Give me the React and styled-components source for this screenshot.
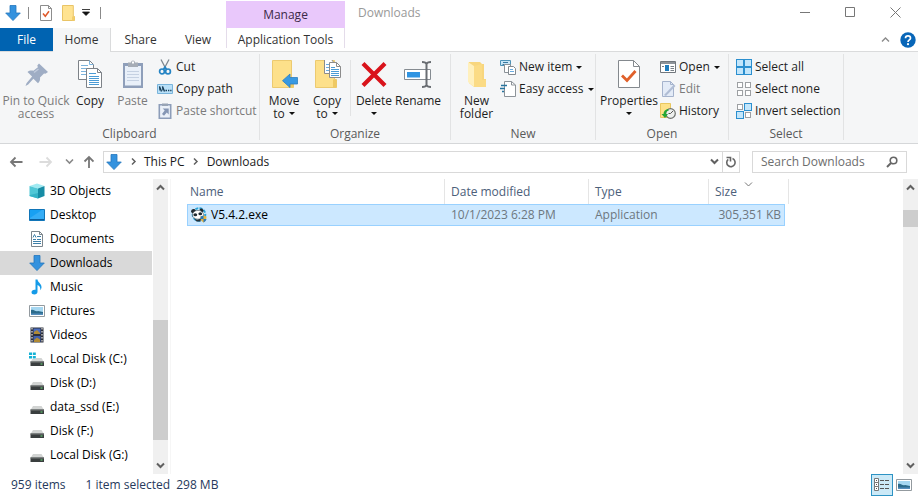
import React from 'react'
import styled, { createGlobalStyle, css } from 'styled-components'

const GlobalStyle = createGlobalStyle`
  * {
    box-sizing: border-box;
  }

  body {
    margin: 0;
    background: #fff;
    color: #1e1e1e;
    font: 12px/16px "Open Sans", "Noto Sans", sans-serif;
  }

  button, input {
    margin: 0;
    padding: 0;
    border: 0;
    background: none;
    color: inherit;
    font: inherit;
  }

  svg {
    display: block;
    flex: none;
  }
`

const Window = styled.div`
  display: flex;
  flex-direction: column;
  min-height: 100vh;
`

/* title bar */
const TitleBar = styled.header`
  display: flex;
  height: 28px;
`
const QuickAccess = styled.div`
  display: flex;
  align-items: center;
  width: 226px;
  padding: 0 0 3px 5px;
`
const QuickButton = styled.button`
  display: flex;
  justify-content: center;
  width: ${({ $width }) => $width || 22}px;
`
const QuickDivider = styled.span`
  width: 1px;
  height: 12px;
  margin: 0 6px 0 7px;
  background: #8a8a8a;
`
const ContextTitle = styled.div`
  width: 119px;
  margin-top: 1px;
  background: #e9c8fb;
  color: #3c2a48;
  line-height: 28px;
  text-align: center;
`
const Title = styled.h1`
  flex: 1;
  margin: 0;
  padding-left: 13px;
  color: #999;
  font-size: 12px;
  font-weight: 400;
  line-height: 26px;
`
const WindowButton = styled.button`
  display: flex;
  align-items: center;
  justify-content: center;
  width: 45px;
  height: 24px;
`

/* tabs */
const Tabs = styled.nav`
  display: flex;
  height: 24px;
  border-bottom: 1px solid #dadbdc;
`
const Tab = styled.button`
  width: ${({ $width }) => $width}px;
  height: 24px;
  color: #333;

  ${({ $kind }) => $kind === 'file' && css`
    height: 23px;
    background: #0063b1;
    color: #fff;
  `}
  ${({ $kind }) => $kind === 'active' && css`
    border-right: 1px solid #dadbdc;
    background: #f5f6f7;
  `}
  ${({ $kind }) => $kind === 'context' && css`
    height: 20px;
    padding-top: 4px;
    border: solid #e4dcea;
    border-width: 0 1px;
  `}
`
const TabTools = styled.div`
  display: flex;
  align-items: center;
  gap: 10px;
  margin-left: auto;
  padding-right: 2px;
`
const IconButton = styled.button`
  display: flex;
  align-items: center;
  justify-content: center;
`

/* ribbon */
const Ribbon = styled.section`
  display: flex;
  height: 92px;
  border-bottom: 1px solid #d5d7d9;
  background: #f5f6f7;
`
const Group = styled.div`
  display: flex;
  flex-direction: column;
  width: ${({ $width }) => $width}px;
`
const GroupShell = styled.div`
  display: flex;

  &::after {
    content: '';
    width: 1px;
    margin: 2px 0 3px;
    background: #e2e3e4;
  }
`
const GroupBody = styled.div`
  display: flex;
  flex: 1;
  padding: 4px 0 0 ${({ $left }) => $left}px;
`
const GroupLabel = styled.div`
  height: 18px;
  color: #5a5a5a;
  line-height: 18px;
  text-align: center;
`
const BigButton = styled.button`
  display: flex;
  flex-direction: column;
  align-items: center;
  width: ${({ $width }) => $width || 44}px;
  padding-top: 4px;
  color: ${({ disabled }) => (disabled ? '#7b7b7b' : '#1e1e1e')};
  line-height: 13px;
  white-space: nowrap;

  > svg {
    margin-bottom: 6px;
  }
`
const BigLine = styled.span`
  display: flex;
  align-items: center;
  justify-content: center;
  gap: 4px;
  min-height: 13px;
`
const SmallList = styled.div`
  display: flex;
  flex-direction: column;
`
const SmallButton = styled.button`
  display: flex;
  align-items: center;
  gap: 3px;
  height: 22px;
  color: ${({ disabled }) => (disabled ? '#7b7b7b' : '#1e1e1e')};
  white-space: nowrap;
`
const Split = styled.span`
  width: 1px;
  height: 56px;
  margin: 4px 1px 0 2px;
  background: #e2e3e4;
`
const CaretSlot = styled.span`
  margin-left: 1px;
`

/* address row */
const AddressRow = styled.div`
  display: flex;
  align-items: center;
  height: 35px;
  padding: 0 11px 0 8px;
`
const NavButton = styled(IconButton)`
  width: ${({ $width }) => $width}px;
  height: 20px;
`
const AddressBox = styled.div`
  display: flex;
  flex: 1;
  height: 22px;
  border: 1px solid #d9d9d9;
`
const Crumbs = styled.div`
  display: flex;
  align-items: center;
  flex: 1;
  padding-left: 2px;
`
const Crumb = styled.a`
  color: #1a1a1a;
  text-decoration: none;
`
const CrumbArrow = styled.span`
  display: flex;
  justify-content: center;
  width: 22px;
`
const Refresh = styled(IconButton)`
  width: 17px;
  border-left: 1px solid #d9d9d9;
`
const SearchBox = styled.label`
  display: flex;
  align-items: center;
  width: 155px;
  height: 22px;
  margin-left: 12px;
  padding: 0 8px;
  border: 1px solid #d9d9d9;
`
const SearchInput = styled.input`
  flex: 1;
  min-width: 0;
  outline: 0;

  &::placeholder {
    color: #6d6d6d;
    opacity: 1;
  }
`

/* body */
const Body = styled.div`
  display: flex;
  flex: 1;
`
const Sidebar = styled.nav`
  width: 152px;
  margin-right: 1px;
`
const Place = styled.a`
  display: flex;
  align-items: center;
  gap: 5px;
  height: 24px;
  padding-left: 29px;
  background: ${({ $active }) => ($active ? '#d9d9d9' : 'transparent')};
  color: #000;
  text-decoration: none;
  white-space: nowrap;
`
const Track = styled.div`
  display: flex;
  flex-direction: column;
  width: 15px;
  background: #f0f0f0;
`
const TrackButton = styled(IconButton)`
  height: 17px;
`
const TrackSpace = styled.div`
  flex: ${({ $grow }) => $grow} 1 0;
`
const Thumb = styled.div`
  height: ${({ $height }) => $height}px;
  background: #cdcdcd;
`
const Files = styled.main`
  flex: 1;
  margin-left: 2px;
  padding-left: 16px;
  border-left: 1px solid #f6f6f6;
`
const FileTable = styled.table`
  display: block;
`
const TablePart = styled.thead`
  display: block;
`
const HeadRow = styled.tr`
  display: grid;
  grid-template-columns: 258px 144px 120px 80px;
  height: 25px;
`
const HeadCell = styled.th`
  display: flex;
  flex-direction: column;
  justify-content: center;
  padding: 0 0 0 ${({ $first }) => ($first ? 3 : 6)}px;
  border-right: 1px solid #e5e5e5;
  color: #4c607a;
  font-weight: 400;
  text-align: left;
`
const SortMark = styled.span`
  display: flex;
  justify-content: center;
  height: 4px;
  margin: -4px 0 0 -6px;
`
const FileRow = styled.tr`
  display: grid;
  grid-template-columns: 257px 144px 120px 75px;
  width: 598px;
  height: 22px;
  border: 1px solid #99d1ff;
  background: #cce8ff;
`
const Cell = styled.td`
  display: flex;
  align-items: center;
  justify-content: ${({ $right }) => ($right ? 'flex-end' : 'flex-start')};
  gap: 4px;
  padding: 0 ${({ $right }) => ($right ? 3 : 0)}px 0 ${({ $name }) => ($name ? 3 : 6)}px;
  color: ${({ $name }) => ($name ? '#000' : '#6d7780')};
  white-space: nowrap;
`

/* status bar */
const StatusBar = styled.footer`
  display: flex;
  align-items: center;
  height: 22px;
  padding-left: 11px;
  color: #26395c;
`
const StatusText = styled.span`
  margin-right: ${({ $gap }) => $gap || 0}px;
`
const ViewButtons = styled.div`
  display: flex;
  margin-left: auto;
  padding-right: 3px;
`
const ViewButton = styled(IconButton)`
  width: 22px;
  height: 22px;
  border: ${({ $active }) => ($active ? '1px solid #2d93c4' : 0)};
  background: ${({ $active }) => ($active ? '#cbe9f7' : 'none')};
`

const Svg = ({ w = 16, h = w, children }) => (
  <svg width={w} height={h} viewBox={`0 0 ${w} ${h}`} fill="none" aria-hidden="true">
    {children}
  </svg>
)

const Caret = () => <Svg w={6} h={3}><path d="M0 0h6L3 3z" fill="#111" /></Svg>

const Chevron = ({ dir = 'down', color = '#606060', width = 2 }) => {
  const paths = {
    down: 'M1 2.500l3.500 3.500L8 2.500',
    up: 'M1 6.500L4.500 3 8 6.500',
    right: 'M3 1.500l3 3-3 3'
  }
  return <Svg w={9}><path d={paths[dir]} stroke={color} strokeWidth={width} /></Svg>
}

const DownArrow = () => (
  <Svg>
    <path d="M5 .5h6V8h4.3L8 15.6.7 8H5z" fill="#3492de" stroke="#2376bd" strokeWidth=".8" />
  </Svg>
)

const SmallPage = () => (
  <Svg w={12} h={16}>
    <path d="M.5.5h8l3 3v12H.5z" fill="#fff" stroke="#8d8d8d" />
    <path d="M8.5.5v3h3" stroke="#8d8d8d" />
    <path d="M3 8.5l2.3 2.8L9 6.2" stroke="#e0592a" strokeWidth="1.5" />
  </Svg>
)

const SmallFolder = () => (
  <Svg w={13} h={16}>
    <path d="M.5.5h10.8v11h1.2v4H.5z" fill="#ffe391" stroke="#e9c466" />
    <path d="M10 11.5h2.5v4H10z" fill="#f2ce6b" />
  </Svg>
)

const PinIcon = () => (
  <Svg w={28}>
    <path d="M17 3.500l9 8.500-2.600 1.800-1.400-.4-4 4c.4 2.100-.4 4.400-2 5.800l-4.600-4.400-5.200 5.800-2.700 1.300 1-2.700 5.600-6.700L5.500 12c1.700-1.400 3.700-1.800 5.900-1.200l4.500-3.500-.6-1.800z" fill="#9fadc4" />
    <path d="M12 12.500l4.500-3.500" stroke="#c1cbdc" strokeWidth="1.5" />
  </Svg>
)

const CopyPages = () => (
  <Svg w={26} h={28}>
    <path d="M1.5.5h11l4 4v15h-15z" fill="#fff" stroke="#7d8288" />
    <path d="M12.5.5v4h4M4 5.5h7M4 8.5h9M4 11.5h5M4 14.5h5" stroke="#7cb3dc" />
    <path d="M9.5 8.5h11l4 4v15h-15z" fill="#fff" stroke="#7d8288" />
    <path d="M20.5 8.5v4h4" stroke="#7d8288" />
    <path d="M12 13.5h7M12 16.5h10M12 18.5h10M12 20.5h10M12 22.5h10M12 24.5h10" stroke="#4b9bd5" />
  </Svg>
)

const Clipboard = () => (
  <Svg w={22} h={28}>
    <path d="M1 3h20v25H1z" fill="#8f9fba" />
    <path d="M3 6h16v19.500H3z" fill="#e9f0f9" />
    <path d="M6 2.500h3a2 2 0 014 0h3V7H6z" fill="#a5acb6" />
    <path d="M10 1.500h2v2h-2z" fill="#fff" />
    <path d="M5 11.5h12M5 14.5h12M5 17.5h12M5 20.5h12" stroke="#c5d1e2" />
  </Svg>
)

const Scissors = () => (
  <Svg>
    <path d="M4 .5l5.200 10M12 .5L6.700 10.500" stroke="#7e8890" strokeWidth="1.300" />
    <path d="M8 7.500l1.500 3M8 7.500l-1.500 3" stroke="#2584c4" strokeWidth="1.600" />
    <circle cx="5" cy="12.400" r="2.400" stroke="#2584c4" strokeWidth="1.700" />
    <circle cx="11" cy="12.400" r="2.400" stroke="#2584c4" strokeWidth="1.700" />
  </Svg>
)

const PathIcon = () => (
  <Svg>
    <path d="M.5 3.500h15v9H.5z" fill="#b9e0f8" stroke="#79b4db" />
    <path d="M2.500 5.500l2 5M5.500 5.500l2 5" stroke="#173d57" strokeWidth="1.400" />
    <path d="M2.500 5.500v4M5.500 5.500v4" stroke="#173d57" strokeWidth=".7" />
    <path d="M8.500 9.500H10M11 9.500h1.300M13.200 9.500h1.300" stroke="#173d57" strokeWidth="1.300" />
  </Svg>
)

const ShortcutIcon = () => (
  <Svg>
    <path d="M2.300 1.800h11.400v13.400H2.300z" fill="#eaf0f8" stroke="#8d9db9" strokeWidth="1.600" />
    <path d="M5 .5h6V3H5z" fill="#98a4b5" />
    <path d="M5.700 5.500h6v6L9.800 9.500 7 12.700 5 11l2.700-3.500z" fill="#8596b4" />
  </Svg>
)

const Folder = ({ children }) => (
  <Svg w={27} h={28}>
    <path d="M1.500.500h19v19h2v8h-21z" fill="#fde08a" stroke="#ecca70" />
    <path d="M19 19.500h3.500v8H19z" fill="#efc963" />
    {children}
  </Svg>
)

const MoveIcon = () => (
  <Folder>
    <path d="M26.500 17.500V24H19v3.500L11.500 20.700 19 14v3.500z" fill="#3899e2" stroke="#2d7fc0" strokeWidth=".8" />
  </Folder>
)

const CopyToIcon = () => (
  <Folder>
    <path d="M10.500-.5h7l3 4v10h-10z" fill="#fff" stroke="#8c8c8c" />
    <path d="M12 4.500h4M12 7.500h3M12 10.500h3" stroke="#6bace0" />
    <path d="M15.500 2.500h7l4 4v11h-11z" fill="#fff" stroke="#8c8c8c" />
    <path d="M22.500 2.500v4h4" stroke="#8c8c8c" />
    <path d="M17 7.500h4M17 9.500h8M17 11.500h8M17 13.500h8M17 15.500h8" stroke="#4b9bd5" />
  </Folder>
)

const DeleteIcon = () => (
  <Svg w={28}>
    <path d="M3 3.500l22 22M25 3.500l-22 22" stroke="#d9131b" strokeWidth="4.2" />
  </Svg>
)

const RenameIcon = () => (
  <Svg w={28}>
    <path d="M.5 9.500h26v10H.5z" fill="#fff" stroke="#858b91" />
    <path d="M3 12h13v5.500H3z" fill="#2f94e2" />
    <path d="M22.500 3v23M18 2c2.500 0 4 .5 4.500 2 .5-1.500 2-2 4.500-2M18 27c2.500 0 4-.5 4.500-2 .5 1.500 2 2 4.500 2" stroke="#696d72" strokeWidth="2" />
  </Svg>
)

const NewFolderIcon = () => (
  <Svg w={22} h={28}>
    <path d="M3 2h11l2 2h2v15h2v8H8l-5-4z" fill="#f8d67e" />
    <path d="M2 2l6 4v21l-6-5z" fill="#fff0bd" />
    <path d="M8 6l8-2v16h4v7H8z" fill="#fbdb85" />
  </Svg>
)

const NewItemIcon = () => (
  <Svg>
    <path d="M.5 1.500h10v5H.5z" fill="#c9e6f7" stroke="#4e93b8" />
    <path d="M3 3.500h5M2.500 5.500h2" stroke="#38799f" />
    <path d="M4.500 5.500h6v8h-6z" fill="#fff" stroke="#8b9298" />
    <path d="M8.500 7.500h5l2 2v6h-7z" fill="#fff" stroke="#838a90" />
    <path d="M10 10.500h3M10 12.500h4" stroke="#6bace0" />
  </Svg>
)

const EasyIcon = () => (
  <Svg>
    <path d="M4.500.5h7l4 3.500v11.500h-11z" fill="#fff" stroke="#8d9399" />
    <path d="M11.500.5V4h4" stroke="#8d9399" />
    <path d="M1 4.500h6M0 7.500h5M2 10.500h2" stroke="#28759f" strokeWidth="1.500" />
  </Svg>
)

const PropertiesIcon = () => (
  <Svg w={22} h={28}>
    <path d="M.5.5h15l6 6v21H.5z" fill="#fff" stroke="#84898e" />
    <path d="M15.500.5v6h6" stroke="#84898e" />
    <path d="M4 15.500l5 5 8.500-9.500" stroke="#e0602a" strokeWidth="2.800" />
  </Svg>
)

const OpenIcon = () => (
  <Svg>
    <path d="M.5 2.500h15v11H.5z" fill="#fff" stroke="#71777d" />
    <path d="M1 4h14" stroke="#8d9399" strokeWidth="2" />
    <path d="M5 6h4v6H5z" fill="#1d7cbd" />
    <path d="M10.500 7.500H14M10.500 9.500H14M10.500 11.500H14M2 7.500h2" stroke="#777f86" />
  </Svg>
)

const EditIcon = () => (
  <Svg>
    <path d="M2.500.5h8l3 3v12h-11z" fill="#e3ebf7" stroke="#a5b3cc" />
    <path d="M10.500.5v3h3" stroke="#a5b3cc" />
    <path d="M4 14L14 3.500l1.500 1.500L6 15z" fill="#b0bdd4" />
  </Svg>
)

const HistoryIcon = () => (
  <Svg>
    <path d="M.5.5h10v14H.5z" fill="#fde189" stroke="#e9c75f" />
    <circle cx="10.500" cy="10.500" r="4.800" fill="#eef0ee" stroke="#6d716d" strokeWidth="1.200" />
    <path d="M10.500 10.500L13 8M10.500 10.500h-2" stroke="#555" />
    <path d="M8 6c-3 .5-4.500 2.500-4.500 5H1.500l3.500 4 3-4H6c0-2 .8-3 2.800-3.500z" fill="#24a735" />
  </Svg>
)

const SQUARES = [[1, 1], [9, 1], [1, 9], [9, 9]]

const SelectIcon = ({ filled }) => (
  <Svg>
    {SQUARES.map(([x, y], i) => (filled[i]
      ? <rect key={i} x={x - 0.5} y={y - 0.5} width="7" height="7" fill="#c3e6fb" stroke="#2b8fcf" />
      : <rect key={i} x={x + 0.5} y={y + 0.5} width="5" height="5" fill="#fff" stroke="#9da0a3" />
    ))}
  </Svg>
)

const CubeIcon = () => (
  <Svg>
    <path d="M.5 3L8 .5 15.500 3 9 5.500z" fill="#a0eaf2" />
    <path d="M.5 3L9 5.500v10L.5 13z" fill="#50c7d6" />
    <path d="M15.500 3L9 5.500v10l6.500-2.500z" fill="#168ca5" />
    <path d="M1 12l8-2v5.500L.5 13z" fill="#35b3c6" />
  </Svg>
)

const DesktopIcon = () => (
  <Svg>
    <path d="M.5 2.500h15v11H.5z" fill="#18a0f2" stroke="#1175b8" />
    <path d="M1 11L13 3h2v9H1z" fill="#35adf6" />
    <path d="M1 12.500h14" stroke="#0b5e9c" />
  </Svg>
)

const DocumentIcon = () => (
  <Svg>
    <path d="M2.500.5h8l3 3v12h-11z" fill="#fff" stroke="#7b858c" />
    <path d="M10.500.5v3h3" stroke="#7b858c" />
    <path d="M4 6.500l1.500-3L7 6.500M8 5.500h4M4 8.500h3M8 8.500h4M4 10.500h8M4 12.500h8" stroke="#3d80a9" />
  </Svg>
)

const MusicIcon = () => (
  <Svg>
    <path d="M6.500.5h2c.3 3 4 4 4 7.500 0 1.300-.5 2.300-1.300 3.200.6-3-.8-4.400-2.700-5.200v6.800c0 1.700-1.400 2.700-3.100 2.700S2.500 14.700 2.500 13.300c0-1.900 2-3 4-2.500z" fill="#159be8" />
  </Svg>
)

const PictureIcon = () => (
  <Svg>
    <path d="M.5 2.500h15v11H.5z" fill="#fff" stroke="#939a9f" />
    <path d="M2 4h12v8H2z" fill="#a6d7f1" />
    <path d="M2 7c3-1 4 2 7 1l5 1v3H2z" fill="#2b6b8c" />
    <path d="M2 10.500h12V12H2z" fill="#568ebd" />
  </Svg>
)

const VideoIcon = () => (
  <Svg>
    <path d="M1.500.5h13v15h-13z" fill="#2b2f3a" />
    <path d="M4.500 1.500h7V7h-7z" fill="#4b6dc0" />
    <path d="M4.500 9h7v6h-7z" fill="#3f5fae" />
    <path d="M5 5l3-2 3 3v1H5zM5 13l3-2.500 3 2V15H5z" fill="#b08a34" />
    <path d="M3 1v14M13 1v14" stroke="#e2e2e2" strokeWidth="1.200" strokeDasharray="1.500 1.500" />
  </Svg>
)

const DiskIcon = ({ system }) => (
  <Svg>
    <path d="M4 7h8.500l2.500 4H1.500z" fill="#d2d4d3" />
    <path d="M1.500 10.500H15v4.500H1.500z" fill="#3a3e3f" />
    <path d="M1.500 10.500H15v1H1.500z" fill="#777b7b" />
    <path d="M11.500 12.500h2v1h-2z" fill="#68de7a" />
    {system && (
      <>
        <path d="M0 1h7v7H0z" fill="#fff" />
        <path d="M0 1.500h3v2.500H0zM3.800 1.500h3v2.500h-3zM0 5h3v2.500H0zM3.800 5h3v2.500h-3z" fill="#13b1d5" />
      </>
    )}
  </Svg>
)

const PandaIcon = () => (
  <Svg>
    <circle cx="8" cy="7.500" r="6.300" fill="#d9f1fb" stroke="#29a1d6" strokeWidth="2" strokeDasharray="3 1.200" />
    <path d="M0 5c0-3 3-4 5-1.500L2.500 7zM8.500 2.500c1.500-2 4-1 4 1.500L11 6z" fill="#1e2930" />
    <ellipse cx="7" cy="7.800" rx="5.600" ry="4.400" fill="#fff" stroke="#3d4a52" strokeWidth=".6" />
    <ellipse cx="4.300" cy="7.800" rx="1.900" ry="1.500" fill="#1e2930" />
    <ellipse cx="9.300" cy="6.800" rx="1.900" ry="1.500" fill="#1e2930" />
    <path d="M3 11.500c2 1.500 4 1.500 7 0l-.5 3H5.500z" fill="#27323a" />
    <path d="M9.500 9.500l3-1 3 1c0 3-1 5-3 6-2-1-3-3-3-6z" fill="#e9b43a" />
    <path d="M12.500 8.500V12h3c-.3 1.500-1.300 2.800-3 3.500V12h-3V9.500z" fill="#2879bc" />
  </Svg>
)

const PLACES = [
  { name: '3D Objects', icon: <CubeIcon /> },
  { name: 'Desktop', icon: <DesktopIcon /> },
  { name: 'Documents', icon: <DocumentIcon /> },
  { name: 'Downloads', icon: <DownArrow />, active: true },
  { name: 'Music', icon: <MusicIcon /> },
  { name: 'Pictures', icon: <PictureIcon /> },
  { name: 'Videos', icon: <VideoIcon /> },
  { name: 'Local Disk (C:)', icon: <DiskIcon system /> },
  { name: 'Disk (D:)', icon: <DiskIcon /> },
  { name: 'data_ssd (E:)', icon: <DiskIcon /> },
  { name: 'Disk (F:)', icon: <DiskIcon /> },
  { name: 'Local Disk (G:)', icon: <DiskIcon /> }
]

const RibbonGroup = ({ label, width, left, children }) => (
  <GroupShell>
    <Group $width={width}>
      <GroupBody $left={left}>{children}</GroupBody>
      <GroupLabel>{label}</GroupLabel>
    </Group>
  </GroupShell>
)

const Big = ({ icon, lines, menu, ...props }) => (
  <BigButton type="button" {...props}>
    {icon}
    {lines.map((line, i) => (
      <BigLine key={line}>
        {line}
        {menu === 'inline' && i === lines.length - 1 && <Caret />}
      </BigLine>
    ))}
    {menu === 'below' && <BigLine><Caret /></BigLine>}
  </BigButton>
)

const Small = ({ icon, label, menu, disabled }) => (
  <SmallButton type="button" disabled={disabled}>
    {icon}
    {label}
    {menu && <CaretSlot><Caret /></CaretSlot>}
  </SmallButton>
)

const Scrollbar = ({ before, after, thumb }) => (
  <Track>
    <TrackButton type="button" aria-label="Scroll up"><Chevron dir="up" /></TrackButton>
    <TrackSpace $grow={before} />
    <Thumb $height={thumb} />
    <TrackSpace $grow={after} />
    <TrackButton type="button" aria-label="Scroll down"><Chevron /></TrackButton>
  </Track>
)

const App = () => (
  <Window>
    <GlobalStyle />
    <TitleBar>
      <QuickAccess>
        <DownArrow />
        <QuickDivider />
        <QuickButton type="button" aria-label="Properties"><SmallPage /></QuickButton>
        <QuickButton type="button" aria-label="New folder"><SmallFolder /></QuickButton>
        <QuickButton type="button" $width={14} aria-label="Customize toolbar">
          <Svg w={8} h={7}><path d="M0 .5h8M.5 3h7L4 6.500z" fill="#111" stroke="#111" strokeWidth=".8" /></Svg>
        </QuickButton>
        <QuickDivider />
      </QuickAccess>
      <ContextTitle>Manage</ContextTitle>
      <Title>Downloads</Title>
      <WindowButton type="button" aria-label="Minimize">
        <Svg w={11}><path d="M0 5.500h10" stroke="#777" /></Svg>
      </WindowButton>
      <WindowButton type="button" aria-label="Maximize">
        <Svg w={11}><path d="M.5.5h9v9h-9z" stroke="#777" /></Svg>
      </WindowButton>
      <WindowButton type="button" aria-label="Close">
        <Svg w={11}><path d="M.5.5l10 10M10.500.5l-10 10" stroke="#777" /></Svg>
      </WindowButton>
    </TitleBar>

    <Tabs>
      <Tab type="button" $width={53} $kind="file">File</Tab>
      <Tab type="button" $width={58} $kind="active">Home</Tab>
      <Tab type="button" $width={59}>Share</Tab>
      <Tab type="button" $width={56}>View</Tab>
      <Tab type="button" $width={119} $kind="context">Application Tools</Tab>
      <TabTools>
        <IconButton type="button" aria-label="Collapse ribbon">
          <Chevron dir="up" color="#8a8a8a" width={1.4} />
        </IconButton>
        <IconButton type="button" aria-label="Help">
          <Svg>
            <circle cx="8" cy="8" r="7.700" fill="#0866b8" />
            <path d="M5.500 6.200c0-3 5-3 5 0C10.500 8 8 7.800 8 10" stroke="#fff" strokeWidth="1.700" />
            <circle cx="8" cy="12.200" r="1.100" fill="#fff" />
          </Svg>
        </IconButton>
      </TabTools>
    </Tabs>

    <Ribbon>
      <RibbonGroup label="Clipboard" width={259} left={0}>
        <Big icon={<PinIcon />} lines={['Pin to Quick', 'access']} $width={72} disabled />
        <Big icon={<CopyPages />} lines={['Copy']} $width={36} />
        <Big icon={<Clipboard />} lines={['Paste']} $width={49} disabled />
        <SmallList>
          <Small icon={<Scissors />} label="Cut" />
          <Small icon={<PathIcon />} label="Copy path" />
          <Small icon={<ShortcutIcon />} label="Paste shortcut" disabled />
        </SmallList>
      </RibbonGroup>
      <RibbonGroup label="Organize" width={190} left={2}>
        <Big icon={<MoveIcon />} lines={['Move', 'to']} menu="inline" />
        <Big icon={<CopyToIcon />} lines={['Copy', 'to']} menu="inline" $width={42} />
        <Split />
        <Big icon={<DeleteIcon />} lines={['Delete']} menu="below" />
        <Big icon={<RenameIcon />} lines={['Rename']} />
      </RibbonGroup>
      <RibbonGroup label="New" width={144} left={2}>
        <Big icon={<NewFolderIcon />} lines={['New', 'folder']} $width={47} />
        <SmallList>
          <Small icon={<NewItemIcon />} label="New item" menu />
          <Small icon={<EasyIcon />} label="Easy access" menu />
        </SmallList>
      </RibbonGroup>
      <RibbonGroup label="Open" width={132} left={2}>
        <Big icon={<PropertiesIcon />} lines={['Properties']} menu="below" $width={62} />
        <SmallList>
          <Small icon={<OpenIcon />} label="Open" menu />
          <Small icon={<EditIcon />} label="Edit" disabled />
          <Small icon={<HistoryIcon />} label="History" />
        </SmallList>
      </RibbonGroup>
      <RibbonGroup label="Select" width={114} left={7}>
        <SmallList>
          <Small icon={<SelectIcon filled={[1, 1, 1, 1]} />} label="Select all" />
          <Small icon={<SelectIcon filled={[0, 0, 0, 0]} />} label="Select none" />
          <Small icon={<SelectIcon filled={[0, 1, 1, 0]} />} label="Invert selection" />
        </SmallList>
      </RibbonGroup>
    </Ribbon>

    <AddressRow>
      <NavButton type="button" $width={16} aria-label="Back">
        <Svg w={14}><path d="M13.500 7H2M6.500 2.500L2 7l4.500 4.500" stroke="#777" strokeWidth="1.800" /></Svg>
      </NavButton>
      <NavButton type="button" $width={44} aria-label="Forward">
        <Svg w={14}><path d="M.5 7H12M7.500 2.500L12 7l-4.500 4.500" stroke="#dcdcdc" strokeWidth="1.800" /></Svg>
      </NavButton>
      <NavButton type="button" $width={3} aria-label="Recent locations">
        <Chevron color="#888" width={1.6} />
      </NavButton>
      <NavButton type="button" $width={32} aria-label="Up">
        <Svg w={14}><path d="M9 13V2M4.500 6.500L9 2l4.500 4.500" stroke="#777" strokeWidth="1.800" /></Svg>
      </NavButton>
      <AddressBox>
        <Crumbs>
          <DownArrow />
          <CrumbArrow><Chevron dir="right" width={1.5} /></CrumbArrow>
          <Crumb href="#this-pc">This PC</Crumb>
          <CrumbArrow><Chevron dir="right" width={1.5} /></CrumbArrow>
          <Crumb href="#downloads">Downloads</Crumb>
        </Crumbs>
        <NavButton type="button" $width={15} aria-label="Previous locations"><Chevron /></NavButton>
        <Refresh type="button" aria-label="Refresh">
          <Svg w={12}>
            <path d="M7.500 2.600A4.200 4.200 0 113.200 3.300" stroke="#666" strokeWidth="1.600" />
            <path d="M1.500 1.500h4v4" stroke="#666" strokeWidth="1.600" />
          </Svg>
        </Refresh>
      </AddressBox>
      <SearchBox>
        <SearchInput type="text" placeholder="Search Downloads" aria-label="Search Downloads" />
        <Svg w={12}>
          <circle cx="7.500" cy="4.500" r="3.300" stroke="#666" strokeWidth="1.600" />
          <path d="M5 7L1 11" stroke="#666" strokeWidth="2" />
        </Svg>
      </SearchBox>
    </AddressRow>

    <Body>
      <Sidebar>
        {PLACES.map(({ name, icon, active }) => (
          <Place key={name} href="#place" $active={active}>
            {icon}
            {name}
          </Place>
        ))}
      </Sidebar>
      <Scrollbar before={124} after={17} thumb={120} />
      <Files>
        <FileTable>
          <TablePart>
            <HeadRow>
              <HeadCell $first>Name</HeadCell>
              <HeadCell>Date modified</HeadCell>
              <HeadCell>Type</HeadCell>
              <HeadCell>
                <SortMark><Chevron color="#777" width={1} /></SortMark>
                Size
              </HeadCell>
            </HeadRow>
          </TablePart>
          <TablePart as="tbody">
            <FileRow>
              <Cell $name>
                <PandaIcon />
                V5.4.2.exe
              </Cell>
              <Cell>10/1/2023 6:28 PM</Cell>
              <Cell>Application</Cell>
              <Cell $right>305,351 KB</Cell>
            </FileRow>
          </TablePart>
        </FileTable>
      </Files>
      <Scrollbar before={14} after={230} thumb={17} />
    </Body>

    <StatusBar>
      <StatusText $gap={20}>959 items</StatusText>
      <StatusText $gap={6}>1 item selected</StatusText>
      <StatusText>298 MB</StatusText>
      <ViewButtons>
        <ViewButton type="button" $active aria-label="Details view">
          <Svg>
            <path d="M.5 1.500h4v4h-4zM.5 5.500h4v4h-4zM.5 9.500h4v4h-4z" fill="#fff" stroke="#777" />
            <path d="M2 3.500h1M2 7.500h1M2 11.500h1M6 3.500h4M11 3.500h4M6 7.500h4M11 7.500h4M6 11.500h4M11 11.500h4" stroke="#555" />
          </Svg>
        </ViewButton>
        <ViewButton type="button" aria-label="Thumbnail view"><PictureIcon /></ViewButton>
      </ViewButtons>
    </StatusBar>
  </Window>
)

export default App
